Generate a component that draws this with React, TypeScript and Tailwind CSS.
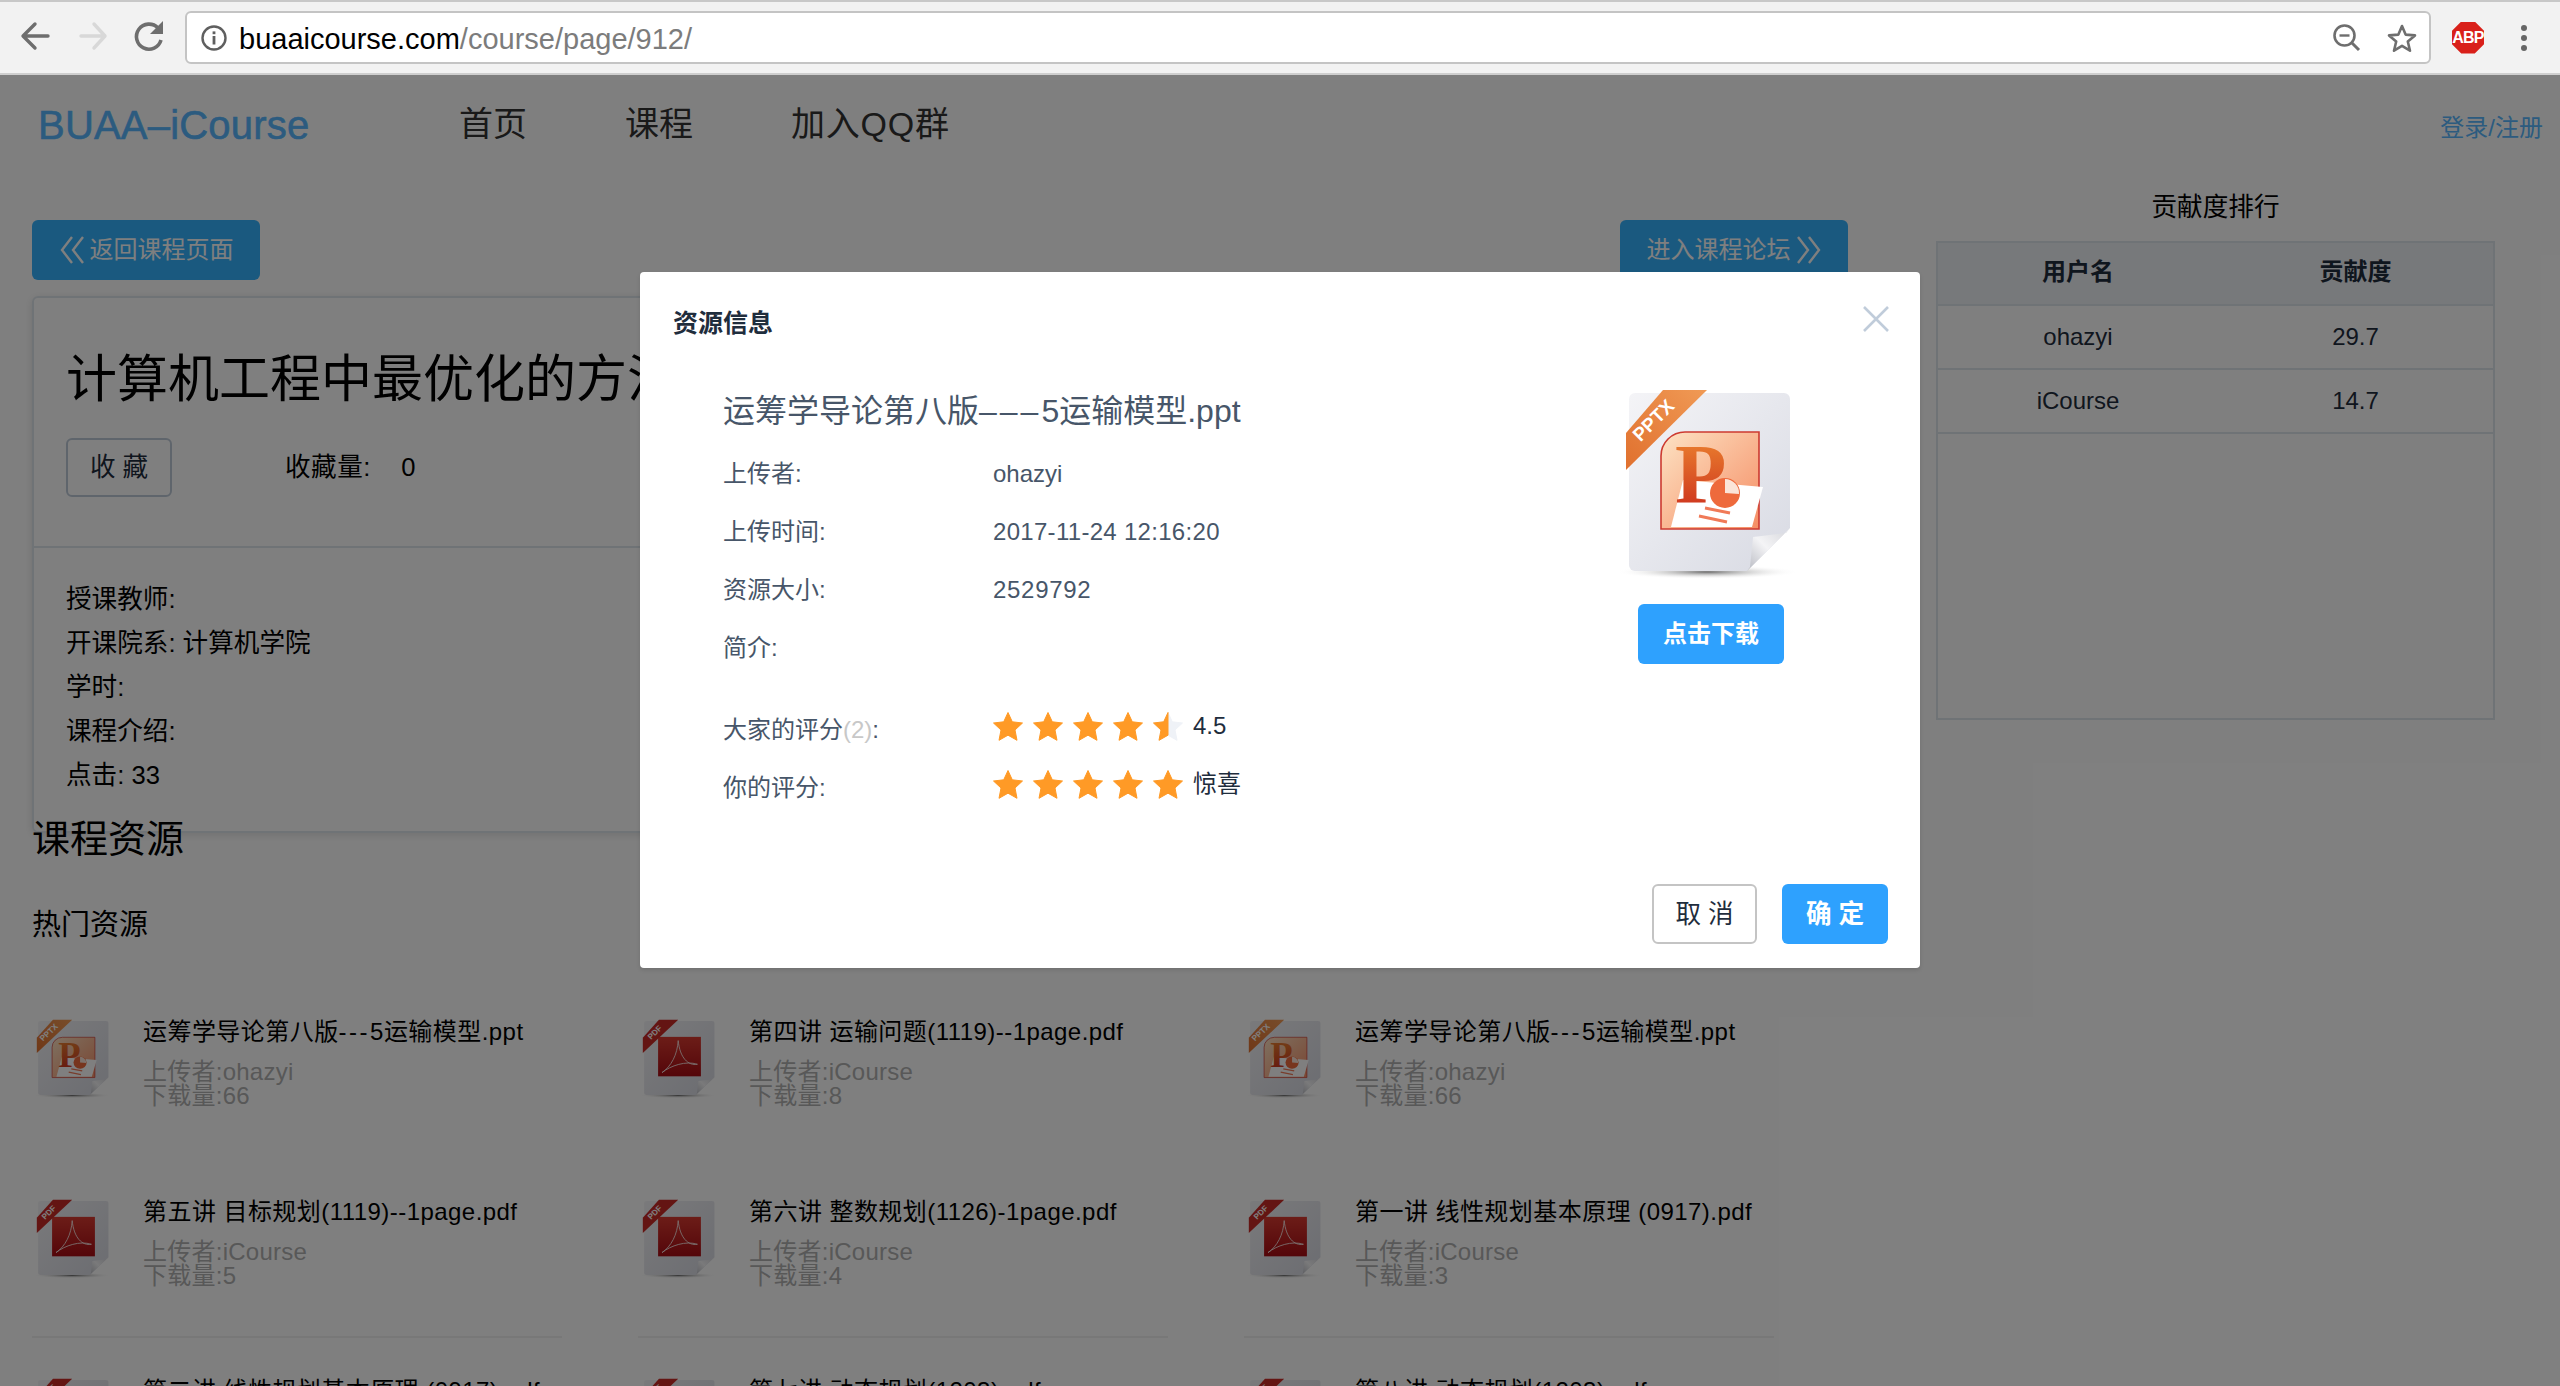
import React from "react";

const FONT = "[font-family:'Liberation_Sans','Noto_Sans_CJK_SC',sans-serif]";

function Defs({ id }: { id: string }) {
  return (
    <defs>
      <linearGradient id={`${id}paper`} x1="0" y1="0" x2="1" y2="1">
        <stop offset="0" stopColor="#f4f4f7" />
        <stop offset="1" stopColor="#d8dae3" />
      </linearGradient>
      <linearGradient id={`${id}ribP`} x1="0" y1="1" x2="1" y2="0">
        <stop offset="0" stopColor="#e0702e" />
        <stop offset="1" stopColor="#f09a55" />
      </linearGradient>
      <linearGradient id={`${id}peach`} x1="0" y1="0" x2="1" y2="1">
        <stop offset="0" stopColor="#fde3c4" />
        <stop offset="1" stopColor="#f58d64" />
      </linearGradient>
      <linearGradient id={`${id}pLetter`} x1="0" y1="0" x2="0" y2="1">
        <stop offset="0" stopColor="#ee8a30" />
        <stop offset="1" stopColor="#c9281c" />
      </linearGradient>
      <linearGradient id={`${id}red`} x1="0" y1="0" x2="0" y2="1">
        <stop offset="0" stopColor="#d93a30" />
        <stop offset="1" stopColor="#a80c14" />
      </linearGradient>
      <linearGradient id={`${id}fold`} x1="0" y1="1" x2="1" y2="0">
        <stop offset="0" stopColor="#b6b8c0" />
        <stop offset="0.5" stopColor="#f4f4f6" />
        <stop offset="1" stopColor="#d4d5da" />
      </linearGradient>
      <radialGradient id={`${id}shadow`}>
        <stop offset="0" stopColor="#6f6f6f" />
        <stop offset="1" stopColor="#ffffff" stopOpacity="0" />
      </radialGradient>
    </defs>
  );
}

function FileIcon({ kind, id, width, height }: { kind: "ppt" | "pdf"; id: string; width: number; height: number }) {
  return (
    <svg width={width} height={height} viewBox="0 0 190 195" preserveAspectRatio="none" className="block">
      <Defs id={id} />
      <ellipse cx="92" cy="184" rx="92" ry="7" fill={`url(#${id}shadow)`} />
      <path d="M20 5H169a6 6 0 0 1 6 6V140L132 183H20a6 6 0 0 1-6-6V11a6 6 0 0 1 6-6Z" fill={`url(#${id}paper)`} />
      <path d="M175 140L171 145 138 149 135 179 132 183Z" fill={`url(#${id}fold)`} />
      {kind === "ppt" ? (
        <g>
          <path d="M70 44H144V141H46V68A24 24 0 0 1 70 44Z" fill={`url(#${id}peach)`} stroke="#cd3a30" strokeWidth="1.6" />
          <path d="M68 92L148 99 137 139H56Z" fill="#ffffff" />
          <circle cx="110" cy="105" r="15" fill="#ee6a3c" />
          <path d="M110 105L110 91A14 14 0 0 1 124 106Z" fill="#fbe5d8" />
          <path d="M90 120L115 125M84 128L112 134" stroke="#f07a58" strokeWidth="3" fill="none" />
          <text x="60" y="115" fontSize="84" fontWeight="700" fontFamily="'Liberation Serif',serif" fill={`url(#${id}pLetter)`}>P</text>
        </g>
      ) : (
        <g>
          <rect x="46" y="43" width="98" height="95" fill={`url(#${id}red)`} />
          <path d="M92 52C90 86 76 114 55 129C75 112 110 100 136 109C115 113 96 94 92 52Z" fill="none" stroke="#f8e9e6" strokeWidth="2" />
        </g>
      )}
      <path d="M48 2H92L11 82V45Z" fill={kind === "ppt" ? `url(#${id}ribP)` : "#c92a26"} />
      <text x="38" y="39" textAnchor="middle" fontSize="19" fontWeight="700" fontFamily="'Liberation Sans',sans-serif" fill="#fff" transform="rotate(-45 38 32)">
        {kind === "ppt" ? "PPTX" : "PDF"}
      </text>
    </svg>
  );
}

function Star({ half }: { half?: boolean }) {
  const d = "M15 0.5L19.3 9.8 29.5 11 22 18 24 28.3 15 23.2 6 28.3 8 18 0.5 11 10.7 9.8Z";
  return (
    <svg width="30" height="30" viewBox="0 0 30 30" className="block">
      <path d={d} fill={half ? "#eff2f7" : "#ff9a26"} stroke={half ? "#eff2f7" : "#ff9a26"} strokeLinejoin="round" />
      {half && (
        <path d="M15 0.5L10.7 9.8 0.5 11 8 18 6 28.3 15 23.2Z" fill="#ff9a26" stroke="#ff9a26" strokeLinejoin="round" />
      )}
    </svg>
  );
}

function Stars({ half }: { half?: boolean }) {
  return (
    <div className="flex gap-[10px]">
      <Star />
      <Star />
      <Star />
      <Star />
      <Star half={half} />
    </div>
  );
}

function Res({ kind, id, title, who, n, line }: { kind: "ppt" | "pdf"; id: string; title: React.ReactNode; who: string; n: string; line?: boolean }) {
  return (
    <div className={line ? "flex w-[530px] h-[141px] border-b-2 border-[#f0f0f0]" : "flex w-[530px]"}>
      <div className="w-[111px] shrink-0 pt-[2px]">
        <FileIcon kind={kind} id={id} width={83} height={81} />
      </div>
      <div>
        <div className="text-[24px] leading-[30px] tracking-[0.45px] text-[#000] whitespace-nowrap">{title}</div>
        <div className="mt-[13px] text-[24px] leading-[24px] tracking-[0.25px] text-[#b0b0b0]">上传者:{who}</div>
        <div className="text-[24px] leading-[24px] tracking-[0.25px] text-[#b0b0b0]">下载量:{n}</div>
      </div>
    </div>
  );
}

function InfoRow({ k, v, extra }: { k: string; v?: React.ReactNode; extra?: string }) {
  return (
    <div className={`flex items-center h-[58px] ${extra ?? ""}`}>
      <div className="w-[270px]">{k}</div>
      <div>{v}</div>
    </div>
  );
}

const PptTitle = (
  <>
    运筹学导论第八版<span className="tracking-[2.5px]">---</span>5运输模型.ppt
  </>
);

export default function App() {
  return (
    <div className={`relative w-[2560px] h-[1386px] overflow-hidden bg-white ${FONT}`}>
      {/* browser chrome */}
      <div className="h-[75px] bg-[#f2f2f2] border-t-2 border-b-2 border-t-[#c8c8c8] border-b-[#cfcfcf] flex items-center">
        <div className="w-[185px] shrink-0 flex items-center">
          <svg width="185" height="40" viewBox="0 0 185 40" className="block">
            <path d="M48 18H25M35 6L23 18 35 30" fill="none" stroke="#6e6e6e" strokeWidth="3.4" strokeLinecap="round" strokeLinejoin="round" />
            <path d="M81 18H104M94 6L105 18 94 30" fill="none" stroke="#d8d8d8" strokeWidth="3.4" strokeLinecap="round" strokeLinejoin="round" />
            <path d="M158 10A12.5 12.5 0 1 0 161 22" fill="none" stroke="#6e6e6e" strokeWidth="3.6" />
            <path d="M150 16H163V3Z" fill="#6e6e6e" />
          </svg>
        </div>
        <div className="w-[2246px] h-[53px] bg-white border-2 border-[#c4c4c4] rounded-[6px] flex items-center pl-[14px] pr-[12px]">
          <svg width="26" height="26" viewBox="0 0 26 26" className="shrink-0 block">
            <circle cx="13" cy="13" r="11.5" fill="none" stroke="#5f5f5f" strokeWidth="2.4" />
            <rect x="11.6" y="11" width="2.8" height="8.5" fill="#5f5f5f" />
            <rect x="11.6" y="6.4" width="2.8" height="2.8" fill="#5f5f5f" />
          </svg>
          <div className="ml-[12px] mt-[2px] text-[29px] leading-[36px] whitespace-nowrap">
            <span className="text-[#000]">buaaicourse.com</span>
            <span className="text-[#7c7c7c]">/course/page/912/</span>
          </div>
          <div className="ml-auto flex items-center gap-[26px]">
            <svg width="28" height="28" viewBox="0 0 28 28" className="block">
              <circle cx="11.5" cy="11.5" r="10" fill="none" stroke="#6e6e6e" strokeWidth="2.6" />
              <path d="M6.5 11.5H16.5" stroke="#6e6e6e" strokeWidth="2.4" />
              <path d="M18.5 18.5L26 26" stroke="#6e6e6e" strokeWidth="3" />
            </svg>
            <svg width="30" height="30" viewBox="0 0 30 30" className="block">
              <path d="M15 3L18.6 11.6 28 12.4 20.8 18.5 23 27.7 15 22.8 7 27.7 9.2 18.5 2 12.4 11.4 11.6Z" fill="none" stroke="#6e6e6e" strokeWidth="2.6" strokeLinejoin="round" />
            </svg>
          </div>
        </div>
        <div className="flex items-center pl-[21px]">
          <div className="w-[32px] h-[32px] bg-[#d9201a] [clip-path:polygon(29%_0,71%_0,100%_29%,100%_71%,71%_100%,29%_100%,0_71%,0_29%)] flex items-center justify-center text-white text-[16px] leading-none font-bold tracking-[-0.8px]">
            ABP
          </div>
          <div className="ml-[37px] flex flex-col gap-[4px]">
            <div className="w-[6px] h-[6px] rounded-full bg-[#666]" />
            <div className="w-[6px] h-[6px] rounded-full bg-[#666]" />
            <div className="w-[6px] h-[6px] rounded-full bg-[#666]" />
          </div>
        </div>
      </div>

      {/* site header */}
      <div className="h-[100px] flex items-center pl-[38px] pr-[17px]">
        <div className="w-[421px] text-[40px] tracking-[0.2px] text-[#58b7ff] [-webkit-text-stroke:0.6px_#58b7ff]">BUAA–iCourse</div>
        <nav className="flex gap-[98px] text-[34px] text-[#333] -mt-[2px]">
          <span>首页</span>
          <span>课程</span>
          <span className="tracking-[0.8px]">加入QQ群</span>
        </nav>
        <div className="ml-auto mt-[5px] text-[24px] text-[#58b7ff]">登录/注册</div>
      </div>

      {/* page */}
      <div className="flex pl-[32px]">
        <div className="w-[1816px] shrink-0 pt-[45px]">
          <div className="flex justify-between">
            <div className="w-[228px] h-[60px] rounded-[6px] bg-[#34b2fe] text-white text-[24px] flex items-center justify-center gap-[5px]">
              <svg width="26" height="30" viewBox="0 0 26 30" className="block">
                <path d="M13 2L3 15 13 28M24 2L14 15 24 28" fill="none" stroke="#fff" strokeWidth="2.4" />
              </svg>
              <span>返回课程页面</span>
            </div>
            <div className="w-[228px] h-[60px] rounded-[6px] bg-[#34b2fe] text-white text-[24px] flex items-center justify-center gap-[5px]">
              <span>进入课程论坛</span>
              <svg width="26" height="30" viewBox="0 0 26 30" className="block">
                <path d="M2 2L12 15 2 28M13 2L23 15 13 28" fill="none" stroke="#fff" strokeWidth="2.4" />
              </svg>
            </div>
          </div>

          <div className="mt-[16px] h-[537px] rounded-[6px] border-2 border-[#dfe6ec] shadow-[0_2px_8px_rgba(0,0,0,0.12)]">
            <div className="h-[250px] border-b-2 border-[#dfe6ec] pl-[32px] pt-[52px]">
              <div className="text-[51px] leading-[60px] text-[#000] whitespace-nowrap">计算机工程中最优化的方法</div>
              <div className="mt-[28px] flex items-center">
                <div className="w-[106px] h-[59px] rounded-[6px] border-2 border-[#bfcbd9] text-[25.6px] text-[#1f2d3d] flex items-center justify-center tracking-[7px] pl-[7px]">收藏</div>
                <div className="ml-[113px] text-[25.6px] text-[#000] whitespace-pre tracking-[0.5px]">收藏量:    0</div>
              </div>
            </div>
            <div className="pl-[32px] pt-[29px] text-[25.6px] leading-[44px] text-[#000]">
              <div>授课教师:</div>
              <div>开课院系: 计算机学院</div>
              <div>学时:</div>
              <div>课程介绍:</div>
              <div>点击: 33</div>
            </div>
          </div>

          <div className="relative -mt-[19px] text-[38px] leading-[50px] text-[#000]">课程资源</div>
          <div className="mt-[41px] text-[29px] leading-[40px] text-[#000]">热门资源</div>

          <div className="mt-[72px] grid grid-cols-[606px_606px_606px] grid-rows-[180px_141px] w-[1818px]">
            <Res kind="ppt" id="a" title={PptTitle} who="ohazyi" n="66" />
            <Res kind="pdf" id="b" title="第四讲 运输问题(1119)--1page.pdf" who="iCourse" n="8" />
            <Res kind="ppt" id="c" title={PptTitle} who="ohazyi" n="66" />
            <Res kind="pdf" id="d" title="第五讲 目标规划(1119)--1page.pdf" who="iCourse" n="5" line />
            <Res kind="pdf" id="e" title="第六讲 整数规划(1126)-1page.pdf" who="iCourse" n="4" line />
            <Res kind="pdf" id="f" title="第一讲 线性规划基本原理 (0917).pdf" who="iCourse" n="3" line />
          </div>
          <div className="mt-[38px] grid grid-cols-[606px_606px_606px] w-[1818px]">
            <Res kind="pdf" id="g" title="第二讲 线性规划基本原理 (0917).pdf" who="iCourse" n="3" />
            <Res kind="pdf" id="h" title="第七讲 动态规划(1203).pdf" who="iCourse" n="3" />
            <Res kind="pdf" id="i" title="第八讲 动态规划(1203).pdf" who="iCourse" n="3" />
          </div>
        </div>

        <div className="ml-[88px] w-[559px] shrink-0 pt-[16px]">
          <div className="text-center text-[25.6px] leading-[32px] text-[#000]">贡献度排行</div>
          <div className="mt-[18px] h-[479px] border-2 border-[#dfe6ec]">
            <table className="w-full table-fixed border-collapse text-[24px] text-[#1f2d3d]">
              <thead>
                <tr className="h-[62px] bg-[#eff2f7] border-b-2 border-[#dfe6ec]">
                  <th className="w-[280px] font-bold pb-[3px]">用户名</th>
                  <th className="font-bold pb-[3px]">贡献度</th>
                </tr>
              </thead>
              <tbody>
                <tr className="h-[64px] border-b-2 border-[#dfe6ec]">
                  <td className="text-center">ohazyi</td>
                  <td className="text-center">29.7</td>
                </tr>
                <tr className="h-[64px] border-b-2 border-[#dfe6ec]">
                  <td className="text-center">iCourse</td>
                  <td className="text-center">14.7</td>
                </tr>
              </tbody>
            </table>
          </div>
        </div>
      </div>

      {/* dimming layer */}
      <div className="absolute left-0 right-0 top-[75px] bottom-0 bg-black/50" />

      {/* modal */}
      <div className="absolute left-[640px] top-[272px] w-[1280px] h-[696px] bg-white rounded-[4px] shadow-[0_2px_4px_rgba(0,0,0,0.12)] text-[#475669]">
        <div className="absolute left-[33px] top-[32px] text-[25px] leading-[38px] font-bold text-[#1f2d3d]">资源信息</div>
        <svg width="26" height="26" viewBox="0 0 26 26" className="absolute left-[1223px] top-[34px] block">
          <path d="M1 1L25 25M25 1L1 25" stroke="#c0ccda" strokeWidth="2.6" />
        </svg>

        <div className="flex pl-[83px] pt-[117px]">
          <div className="w-[892px] text-[24px]">
            <div className="text-[32px] leading-[44px] whitespace-nowrap">
              运筹学导论第八版<span className="tracking-[3px]">–––</span>5运输模型.ppt
            </div>
            <InfoRow k="上传者:" v="ohazyi" extra="mt-[12px]" />
            <InfoRow k="上传时间:" v={<span className="tracking-[0.3px]">2017-11-24 12:16:20</span>} />
            <InfoRow k="资源大小:" v={<span className="tracking-[0.7px]">2529792</span>} />
            <InfoRow k="简介:" />
            <div className="mt-[35px] flex items-center h-[30px]">
              <div className="w-[270px] mt-[6px] whitespace-nowrap">大家的评分<span className="text-[#c8c8c8]">(2)</span>:</div>
              <Stars half />
              <div className="ml-[10px] text-[#1f2d3d] -mt-[2px]">4.5</div>
            </div>
            <div className="mt-[28px] flex items-center h-[30px]">
              <div className="w-[270px] mt-[6px]">你的评分:</div>
              <Stars />
              <div className="ml-[10px] text-[#1f2d3d] -mt-[2px]">惊喜</div>
            </div>
          </div>
          <div className="w-[200px] -mt-[1px] flex flex-col items-start">
            <FileIcon kind="ppt" id="m" width={190} height={195} />
            <div className="mt-[21px] ml-[23px] w-[146px] h-[60px] rounded-[6px] bg-[#2ea1fe] text-white text-[24px] font-bold flex items-center justify-center">点击下载</div>
          </div>
        </div>

        <div className="absolute right-[32px] bottom-[24px] flex gap-[25px]">
          <div className="w-[105px] h-[60px] rounded-[6px] border-2 border-[#c4c4c4] text-[25.6px] text-[#1f2d3d] flex items-center justify-center tracking-[7px] pl-[7px]">取消</div>
          <div className="w-[106px] h-[60px] rounded-[6px] bg-[#2ea1fe] text-[25.6px] font-bold text-white flex items-center justify-center tracking-[7px] pl-[7px]">确定</div>
        </div>
      </div>
    </div>
  );
}
